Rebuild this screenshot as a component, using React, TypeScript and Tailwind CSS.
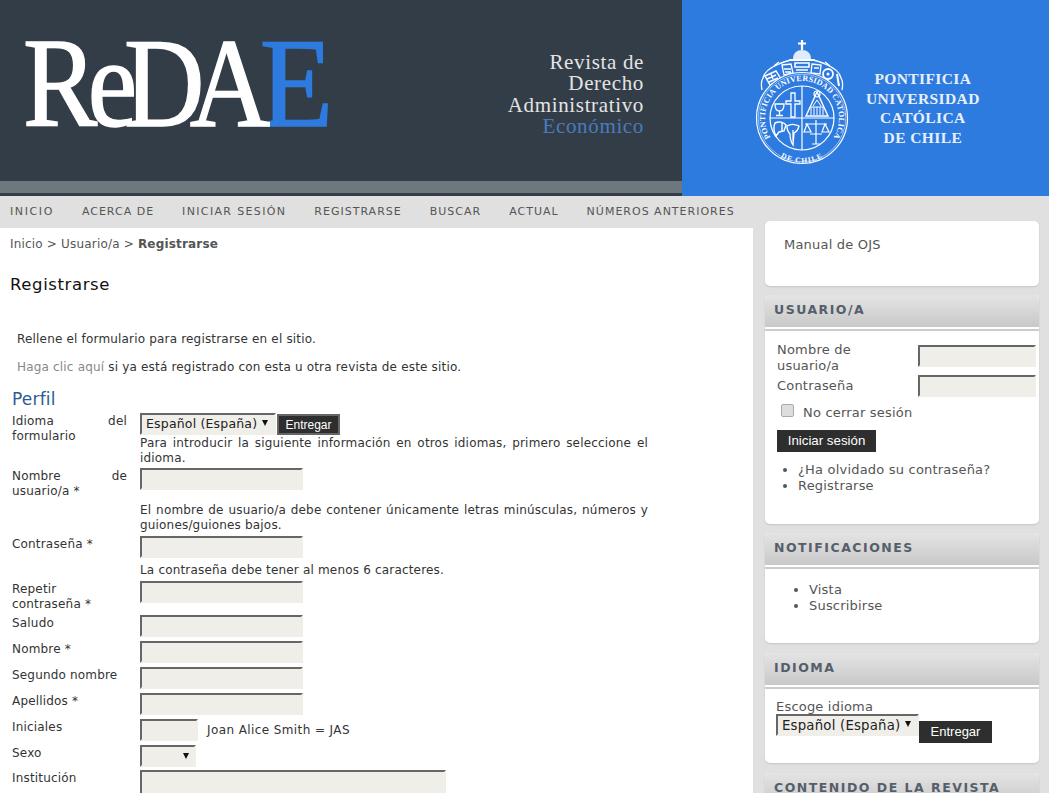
import type { ReactNode } from 'react'

const navItems = ['Inicio', 'Acerca de', 'Iniciar sesión', 'Registrarse', 'Buscar', 'Actual', 'Números anteriores']

const inputClass =
  'block h-[22px] border-2 border-t-[#666] border-l-[#666] border-r-[#efeee8] border-b-[#efeee8] bg-[#efeee8]'

function Seal() {
  return (
    <svg width="94" height="127" viewBox="0 0 94 127" fill="none" stroke="white" className="shrink-0">
      <defs>
        <path id="ring-top" d="M 25.800 110.300 A 37 37 0 1 1 68.200 110.300" />
        <path id="ring-bottom" d="M 16 112 A 44 44 0 0 0 78 112" />
      </defs>
      {/* cross and dome */}
      <path d="M47 2v10M43 5.500h8" strokeWidth="2.200" />
      <path d="M38 21c0-6 4-9 9-9s9 3 9 9z" fill="white" fillOpacity="0.85" stroke="none" />
      <path d="M34 22h26" strokeWidth="1.800" />
      {/* crown of shields */}
      <path d="M7 52c-1-5-1-9 1-12 1-5 6-10 16-14 4-2 8-3 12-4h22c4 1 8 2 12 4 10 4 15 9 16 14 2 3 2 7 1 12" strokeWidth="1.300" />
      <path d="M10 38l11-5 5 8-11 6zM12 41l9-4M14 44l9-4M16 36l2 5" strokeWidth="1.400" />
      <path d="M27 27l9-1 2 9-9 2zM29 31h7M30 34h6" strokeWidth="1.300" />
      <path d="M40 25h14v4H40zM41 32h12" strokeWidth="1.600" />
      <path d="M57 26l9 1-1 9-9-1zM59 30h5" strokeWidth="1.300" />
      <circle cx="73" cy="36" r="5" strokeWidth="1.800" />
      <circle cx="73" cy="36" r="1.500" fill="white" stroke="none" />
      <path d="M82 36l2 12" strokeWidth="2" />
      <path d="M24 24l-5 4M70 24l5 4" strokeWidth="1.600" />
      {/* rings */}
      <circle cx="47" cy="80" r="45.500" fill="#2e7be0" strokeWidth="1.200" />
      <circle cx="47" cy="80" r="43.800" strokeWidth="0.500" />
      <circle cx="47" cy="80" r="32" strokeWidth="1.200" />
      <text fontFamily="'Liberation Serif', serif" fontWeight="700" fontSize="8" fill="white" stroke="none" letterSpacing="0.200">
        <textPath href="#ring-top" startOffset="50%" textAnchor="middle">PONTIFICIA UNIVERSIDAD CATÓLICA</textPath>
      </text>
      <text fontFamily="'Liberation Serif', serif" fontWeight="700" fontSize="7.500" fill="white" stroke="none" letterSpacing="1">
        <textPath href="#ring-bottom" startOffset="50%" textAnchor="middle">DE CHILE</textPath>
      </text>
      {/* quarters */}
      <path d="M47 48v64M15 80h64" strokeWidth="1.200" />
      {/* cross + chalice */}
      <path d="M36 55h4v8h5v3h-5v13h-4V66h-5v-3h5z" strokeWidth="1.300" />
      <path d="M20 66h9c0 5-2 7-4.500 7S20 71 20 66zM24.500 73v4M21 77.500h7" strokeWidth="1.300" />
      {/* triangle */}
      <path d="M62 54l-11 24h22z" strokeWidth="1.400" />
      <circle cx="62" cy="56" r="3" strokeWidth="1.200" />
      <path d="M56 77v-8h12v8M59 69v8M62 69v8M65 69v8M58 68l4-6 4 6" strokeWidth="1" />
      {/* lower quarters */}
      <path d="M20 85c4-2 9-1 11 2l-2 6-5 1-3 4c-2-3-3-9-1-13zM27 84v10" strokeWidth="1.400" />
      <path d="M32 88c3-2 8-2 12 0-1 4-3 6-5 7l-1 12c-2-3-3-7-3-11-2-2-3-5-3-8zM38 92v11" strokeWidth="1.300" />
      <path d="M50 86h22M61 82v24M57 106h8M52 86l-3 8h7zM70 86l-3 8h7zM55 96h12" strokeWidth="1.200" />
    </svg>
  )
}

function Header() {
  return (
    <header className="flex h-[196px]">
      <div className="flex w-[682px] shrink-0 flex-col bg-[#333d48]">
        <div className="flex h-[181px] pl-[23px]">
          {/* logo letters are squeezed together, the A sits on top of the blue E */}
          <div className="mt-[19px] flex h-[128px] origin-left scale-x-[0.87] font-['Liberation_Serif',serif] text-[128px] leading-[128px] text-white [-webkit-text-stroke:1.500px_white]">
            <span className="tracking-[-11px]">R</span>
            <span className="tracking-[-15px]">e</span>
            <span className="tracking-[-17px]">D</span>
            <span className="relative z-10 tracking-[-12px]">A</span>
            <span className="origin-left scale-x-[1.08] text-[#2e7be0] [-webkit-text-stroke:1.500px_#2e7be0]">E</span>
          </div>
          <div className="ml-auto mr-[38px] mt-[52px] text-right font-['Liberation_Serif',serif] text-[21px] leading-[21.330px] tracking-[0.650px] text-[#e4e4e4]">
            <p>Revista de</p>
            <p>Derecho</p>
            <p>Administrativo</p>
            <p className="text-[#4a7bbd]">Económico</p>
          </div>
        </div>
        <div className="h-[12px] bg-[#6e767e]" />
        <div className="h-[3px] bg-[#333d48]" />
      </div>
      <div className="flex flex-1 items-start bg-[#2e7be0] pl-[73px] pt-[38px]">
        <Seal />
        <div className="ml-[17px] mt-[31px] text-center font-['Liberation_Serif',serif] text-[15.500px] font-bold leading-[19.500px] tracking-[0.400px] text-[#e8f0fb]">
          <p>PONTIFICIA</p>
          <p>UNIVERSIDAD</p>
          <p>CATÓLICA</p>
          <p>DE CHILE</p>
        </div>
      </div>
    </header>
  )
}

function Nav() {
  return (
    <nav className="flex h-[32px] items-center gap-[28px] pl-[10px] text-[11px] uppercase tracking-[1px] text-[#555]">
      {navItems.map((item) => (
        <a key={item} className="first:tracking-[1.600px] [&:nth-child(3)]:tracking-[1.350px]">
          {item}
        </a>
      ))}
    </nav>
  )
}

function Row({ label, children, className = '' }: { label: ReactNode; children: ReactNode; className?: string }) {
  return (
    <div className={`flex ${className}`}>
      <div className="w-[115px] shrink-0 pt-[1px] text-justify leading-[15px]">{label}</div>
      <div className="ml-[13px] min-w-0 flex-1">{children}</div>
    </div>
  )
}

function Hint({ children }: { children: ReactNode }) {
  return <p className="w-[508px] text-justify leading-[15px]">{children}</p>
}

function LanguageSelect({ className = '' }: { className?: string }) {
  return (
    <div className={`relative ${className}`}>
      <select className="block h-[22px] w-full appearance-none border-2 border-t-[#666] border-l-[#666] border-r-[#efeee8] border-b-[#efeee8] bg-[#efeee8] pl-[4px] text-[#222]">
        <option>Español (España)</option>
      </select>
      <span className="pointer-events-none absolute right-[8px] top-[7px] h-0 w-0 border-x-[3.500px] border-t-[6px] border-x-transparent border-t-[#111]" />
    </div>
  )
}

function RegisterForm() {
  return (
    <main className="h-full w-[753px] shrink-0 bg-white pl-[10px] pt-[9px] text-[12px] tracking-[0.180px] text-[#333]">
      <p className="leading-[15px] text-[#555]">
        Inicio &gt; Usuario/a &gt; <strong className="font-bold">Registrarse</strong>
      </p>
      <h2 className="mt-[24px] text-[16.500px] leading-[18px] tracking-[0.600px] text-[#111]">Registrarse</h2>
      <p className="ml-[7px] mt-[38px] leading-[15px]">Rellene el formulario para registrarse en el sitio.</p>
      <p className="ml-[7px] mt-[13px] leading-[15px]">
        <a className="text-[#888]">Haga clic aquí</a> si ya está registrado con esta u otra revista de este sitio.
      </p>
      <h3 className="ml-[2px] mt-[14px] text-[17px] leading-[20px] text-[#2f5a94]">Perfil</h3>
      <div className="ml-[2px] mt-[4px] flex flex-col">
        <Row label="Idioma del formulario">
          <div className="flex items-start text-[12.500px]">
            <LanguageSelect className="w-[136px]" />
            <button className="ml-[1px] mt-[1px] h-[21px] w-[63px] border-2 border-[#666] bg-[#2e2e2e] font-['Liberation_Sans',sans-serif] text-[12px] tracking-normal text-white">
              Entregar
            </button>
          </div>
          <div className="mt-[1px]">
            <Hint>Para introducir la siguiente información en otros idiomas, primero seleccione el idioma.</Hint>
          </div>
        </Row>
        <Row label="Nombre de usuario/a *" className="mt-[2px]">
          <input className={`${inputClass} w-[163px]`} />
          <div className="mt-[13px]">
            <Hint>El nombre de usuario/a debe contener únicamente letras minúsculas, números y guiones/guiones bajos.</Hint>
          </div>
        </Row>
        <Row label="Contraseña *" className="mt-[3px]">
          <input type="password" className={`${inputClass} w-[163px]`} />
          <div className="mt-[5px]">
            <Hint>La contraseña debe tener al menos 6 caracteres.</Hint>
          </div>
        </Row>
        <Row label={<>Repetir<br />contraseña *</>} className="mt-[3px]">
          <input type="password" className={`${inputClass} w-[163px]`} />
        </Row>
        <Row label="Saludo" className="mt-[3px]">
          <input className={`${inputClass} w-[163px]`} />
        </Row>
        <Row label="Nombre *" className="mt-[4px]">
          <input className={`${inputClass} w-[163px]`} />
        </Row>
        <Row label="Segundo nombre" className="mt-[4px]">
          <input className={`${inputClass} w-[163px]`} />
        </Row>
        <Row label="Apellidos *" className="mt-[4px]">
          <input className={`${inputClass} w-[163px]`} />
        </Row>
        <Row label="Iniciales" className="mt-[4px]">
          <div className="flex items-center gap-[9px]">
            <input className={`${inputClass} w-[58px]`} />
            <span className="mb-[1px] tracking-[0.400px]">Joan Alice Smith = JAS</span>
          </div>
        </Row>
        <Row label="Sexo" className="mt-[4px]">
          <div className="relative h-[22px] w-[56px] border-2 border-t-[#666] border-l-[#666] border-r-[#efeee8] border-b-[#efeee8] bg-[#efeee8]">
            <span className="absolute right-[5px] top-[6px] h-0 w-0 border-x-[3.500px] border-t-[6px] border-x-transparent border-t-[#111]" />
          </div>
        </Row>
        <Row label="Institución" className="mt-[3px]">
          <textarea className={`${inputClass} !h-[60px] w-[306px] resize-none`} />
        </Row>
      </div>
    </main>
  )
}

function SideCard({ title, children, className = '' }: { title?: string; children: ReactNode; className?: string }) {
  return (
    <section className={`shrink-0 overflow-hidden rounded-[5px] bg-white shadow-[0_1px_2px_rgba(0,0,0,0.12)] ${className}`}>
      {title && (
        <div className="border-b-2 border-b-[#ccc] bg-white pb-[2px]">
          <h4 className="flex h-[32px] items-center bg-gradient-to-b from-[#e4e4e4] to-[#c8c8c8] pb-[2px] pl-[9px] text-[12.500px] font-bold uppercase tracking-[1.500px] text-[#555e6b]">
            {title}
          </h4>
        </div>
      )}
      {children}
    </section>
  )
}

function Sidebar() {
  return (
    <aside className="ml-[12px] mt-[-7px] flex w-[274px] shrink-0 flex-col text-[13px] tracking-[0.200px] text-[#555]">
      <SideCard className="h-[65px] pl-[19px] pt-[14px]">
        <a className="leading-[15px]">Manual de OJS</a>
      </SideCard>
      <SideCard title="Usuario/a" className="mt-[9px] h-[229px]">
        <div className="pl-[12px] pr-[2px] pt-[11px]">
          <div className="flex">
            <span className="w-[141px] pr-[20px] leading-[16px]">Nombre de usuario/a</span>
            <input className={`${inputClass} mt-[3px] w-[118px]`} />
          </div>
          <div className="mt-[1px] flex">
            <span className="mt-[3px] w-[141px] leading-[16px]">Contraseña</span>
            <input type="password" className={`${inputClass} w-[118px]`} />
          </div>
          <label className="ml-[4px] mt-[7px] flex items-center gap-[9px] leading-[16px]">
            <input type="checkbox" className="mb-[5px] h-[13px] w-[13px] appearance-none rounded-[2px] border border-[#aaa] bg-[#ddd]" />
            No cerrar sesión
          </label>
          <button className="mt-[8px] block h-[22px] w-[99px] bg-[#2e2e2e] font-['Liberation_Sans',sans-serif] text-[13.300px] tracking-normal text-white">
            Iniciar sesión
          </button>
          <ul className="ml-[21px] mt-[10px] list-disc leading-[16px]">
            <li>¿Ha olvidado su contraseña?</li>
            <li>Registrarse</li>
          </ul>
        </div>
      </SideCard>
      <SideCard title="Notificaciones" className="mt-[9px] h-[110px]">
        <ul className="ml-[44px] mt-[13px] list-disc leading-[16px]">
          <li>Vista</li>
          <li>Suscribirse</li>
        </ul>
      </SideCard>
      <SideCard title="Idioma" className="mt-[10px] h-[110px]">
        <div className="pl-[11px] pt-[10px]">
          <p className="mb-[-1px] leading-[16px]">Escoge idioma</p>
          <div className="flex items-start text-[13.300px]">
            <LanguageSelect className="w-[143px]" />
            <button className="mt-[7px] h-[22px] w-[73px] bg-[#2e2e2e] font-['Liberation_Sans',sans-serif] text-[13px] tracking-normal text-white">
              Entregar
            </button>
          </div>
        </div>
      </SideCard>
      <SideCard title="Contenido de la revista" className="mt-[10px] h-[60px]">
        <div />
      </SideCard>
    </aside>
  )
}

export default function App() {
  return (
    <div className="h-screen overflow-hidden bg-[#e0e0e0] font-['DejaVu_Sans',Verdana,sans-serif]">
      <Header />
      <Nav />
      <div className="flex h-[600px]">
        <RegisterForm />
        <Sidebar />
      </div>
    </div>
  )
}
